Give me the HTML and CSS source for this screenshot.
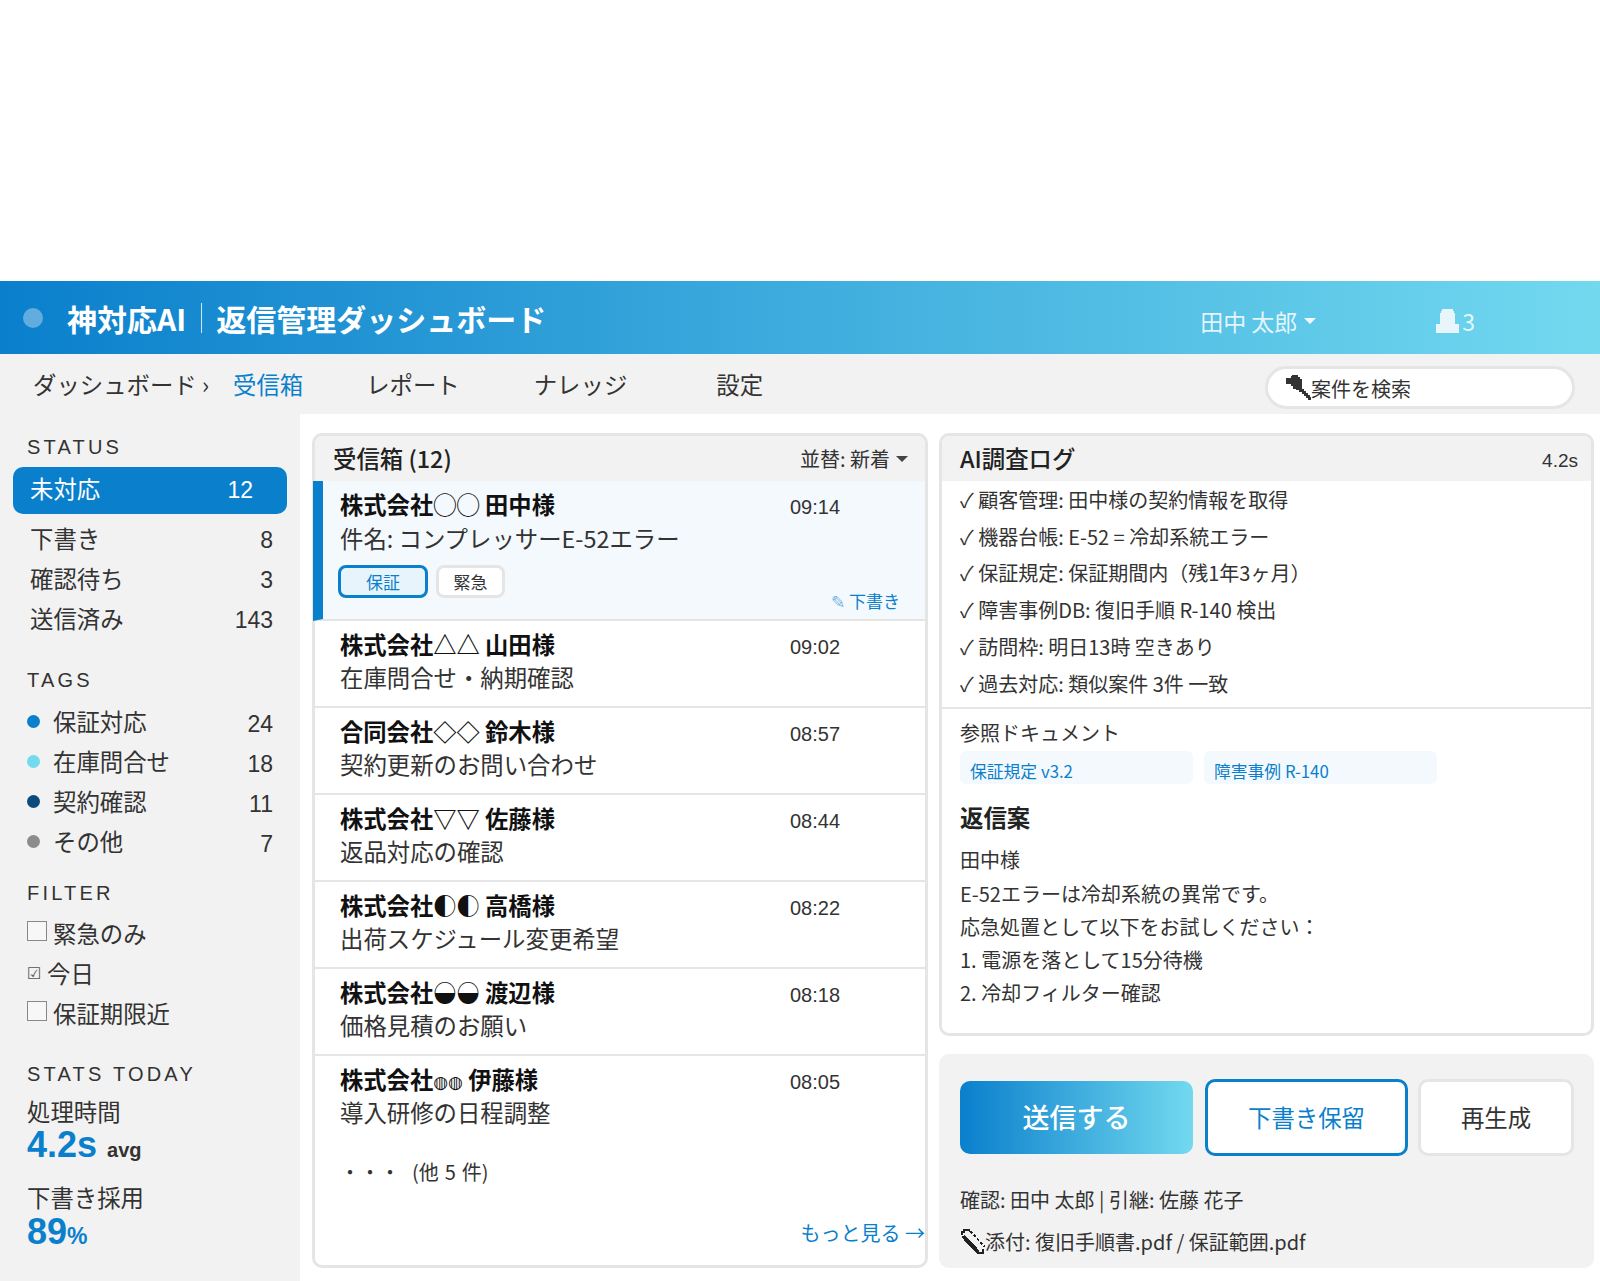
FILE: index.html
```html
<!DOCTYPE html>
<html lang="ja">
<head>
    <meta charset="UTF-8">
    <title>神対応AI | 返信管理ダッシュボード</title>
    <link rel="stylesheet" href="styles.css">
</head>
<body>
    <header class="topbar">
        <span class="logo-dot"></span>
        <span class="brand">神対応AI</span>
        <span class="brand-sep"></span>
        <span class="brand">返信管理ダッシュボード</span>
        <span class="user">田中 太郎<span class="caret caret-light"></span></span>
        <span class="bell">
            <svg width="23" height="24" viewBox="0 0 23 24" shape-rendering="crispEdges"><path d="M6 0h11v2h1v2h1v11h4v9H0v-9h4V4h1V2h1z" fill="#e8f6fc"/></svg>
            3
        </span>
    </header>

    <nav class="navbar">
        <span class="nav-crumb">ダッシュボード ›</span>
        <span class="nav-item active">受信箱</span>
        <span class="nav-item report">レポート</span>
        <span class="nav-item know">ナレッジ</span>
        <span class="nav-item conf">設定</span>
        <div class="search">
            <svg width="25" height="25" viewBox="0 0 25 25" shape-rendering="crispEdges"><path d="M6 0h6v2h2v2h2v10h2v2h2v2h2v2h2v2h1v3h-3v-2h-2v-2h-2v-2h-2v-2h-3v-2h-3v-1H7v-3H5V9H0V3h5V1h1z" fill="#333"/></svg>
            <span>案件を検索</span>
        </div>
    </nav>

    <div class="layout">
        <aside class="sidebar">
            <div class="side-head first">STATUS</div>
            <div class="status-row active"><span>未対応</span><span class="num">12</span></div>
            <div class="status-row"><span>下書き</span><span class="num">8</span></div>
            <div class="status-row"><span>確認待ち</span><span class="num">3</span></div>
            <div class="status-row"><span>送信済み</span><span class="num">143</span></div>

            <div class="side-head tags">TAGS</div>
            <div class="tag-row"><i class="dot blue"></i><span>保証対応</span><span class="num">24</span></div>
            <div class="tag-row"><i class="dot sky"></i><span>在庫問合せ</span><span class="num">18</span></div>
            <div class="tag-row"><i class="dot navy"></i><span>契約確認</span><span class="num">11</span></div>
            <div class="tag-row"><i class="dot gray"></i><span>その他</span><span class="num">7</span></div>

            <div class="side-head filter">FILTER</div>
            <div class="check-row"><i class="box"></i>緊急のみ</div>
            <div class="check-row"><span class="ballot">☑</span>今日</div>
            <div class="check-row"><i class="box"></i>保証期限近</div>

            <div class="side-head stats">STATS TODAY</div>
            <div class="stat-label">処理時間</div>
            <div class="stat-value">4.2s <small class="avg">avg</small></div>
            <div class="stat-label second">下書き採用</div>
            <div class="stat-value two">89<small class="pct">%</small></div>
        </aside>

        <section class="panel inbox">
            <div class="panel-head">
                <span class="panel-title">受信箱 (12)</span>
                <span class="sort">並替: 新着<span class="caret"></span></span>
            </div>
            <div class="mail selected">
                <div class="mail-line"><b>株式会社◯◯ 田中様</b><span class="time">09:14</span></div>
                <div class="mail-sub">件名: コンプレッサーE-52エラー</div>
                <div class="mail-tags">
                    <span class="pill pill-blue">保証</span>
                    <span class="pill pill-gray">緊急</span>
                    <span class="draft"><span class="pen">✎</span> 下書き</span>
                </div>
            </div>
            <div class="mail">
                <div class="mail-line"><b>株式会社△△ 山田様</b><span class="time">09:02</span></div>
                <div class="mail-sub">在庫問合せ・納期確認</div>
            </div>
            <div class="mail">
                <div class="mail-line"><b>合同会社◇◇ 鈴木様</b><span class="time">08:57</span></div>
                <div class="mail-sub">契約更新のお問い合わせ</div>
            </div>
            <div class="mail">
                <div class="mail-line"><b>株式会社▽▽ 佐藤様</b><span class="time">08:44</span></div>
                <div class="mail-sub">返品対応の確認</div>
            </div>
            <div class="mail">
                <div class="mail-line"><b>株式会社◐◐ 高橋様</b><span class="time">08:22</span></div>
                <div class="mail-sub">出荷スケジュール変更希望</div>
            </div>
            <div class="mail">
                <div class="mail-line"><b>株式会社◒◒ 渡辺様</b><span class="time">08:18</span></div>
                <div class="mail-sub">価格見積のお願い</div>
            </div>
            <div class="mail last">
                <div class="mail-line"><b>株式会社<span class="mark-sm">◍◍</span> 伊藤様</b><span class="time">08:05</span></div>
                <div class="mail-sub">導入研修の日程調整</div>
            </div>
            <div class="more-count">・・・<span class="more-rest">(他 5 件)</span></div>
            <div class="more-link">もっと見る →</div>
        </section>

        <div class="right">
            <section class="panel ai">
                <div class="panel-head">
                    <span class="panel-title">AI調査ログ</span>
                    <span class="elapsed">4.2s</span>
                </div>
                <ul class="log">
                    <li>✓ 顧客管理: 田中様の契約情報を取得</li>
                    <li>✓ 機器台帳: E-52 = 冷却系統エラー</li>
                    <li>✓ 保証規定: 保証期間内（残1年3ヶ月）</li>
                    <li>✓ 障害事例DB: 復旧手順 R-140 検出</li>
                    <li>✓ 訪問枠: 明日13時 空きあり</li>
                    <li>✓ 過去対応: 類似案件 3件 一致</li>
                </ul>
                <div class="refs">
                    <div class="refs-title">参照ドキュメント</div>
                    <div class="chips">
                        <span class="chip">保証規定 v3.2</span>
                        <span class="chip">障害事例 R-140</span>
                    </div>
                    <h3 class="reply-title">返信案</h3>
                    <div class="reply">
                        <p>田中様</p>
                        <p>E-52エラーは冷却系統の異常です。</p>
                        <p>応急処置として以下をお試しください：</p>
                        <p>1. 電源を落として15分待機</p>
                        <p>2. 冷却フィルター確認</p>
                    </div>
                </div>
            </section>

            <section class="actions">
                <div class="btns">
                    <button class="btn btn-send">送信する</button>
                    <button class="btn btn-hold">下書き保留</button>
                    <button class="btn btn-regen">再生成</button>
                </div>
                <div class="note">確認: 田中 太郎 | 引継: 佐藤 花子</div>
                <div class="note attach">
                    <svg width="25" height="27" viewBox="0 0 25 27" fill="none" stroke="#222" shape-rendering="crispEdges">
                        <path d="M2 7V4h2V2h6" stroke-width="2"/>
                        <path d="M3 8l15 16" stroke-width="4"/>
                        <path d="M17 25h6v-3h1" stroke-width="2"/>
                        <path d="M10 3l15 16" stroke-width="2" stroke-dasharray="3 2"/>
                    </svg>
                    添付: 復旧手順書.pdf / 保証範囲.pdf
                </div>
            </section>
        </div>
    </div>
</body>
</html>
```

FILE: styles.css
```css
* {
    box-sizing: border-box;
}
body {
    margin: 0;
    padding-top: 281px;
    background: #fff;
    color: #333;
    font-family: "Noto Sans CJK JP", "Liberation Sans", sans-serif;
    font-size: 20px;
}
.topbar {
    height: 73px;
    display: flex;
    align-items: center;
    padding-left: 23px;
    background: linear-gradient(90deg, #0a7fcc, #72d9ef);
    color: #fff;
}
.logo-dot {
    width: 20px;
    height: 20px;
    border-radius: 50%;
    background: rgba(255,255,255,0.35);
    margin-right: 24px;
}
.brand {
    font-size: 30px;
    font-weight: 700;
}
.brand-sep {
    width: 1px;
    height: 30px;
    background: rgba(255,255,255,0.8);
    margin: 0 14px 0 15px;
}
.user {
    margin-left: 654px;
    margin-top: 6px;
    font-size: 23px;
    color: rgba(255,255,255,0.85);
    display: flex;
    align-items: center;
}
.caret {
    display: inline-block;
    width: 0;
    height: 0;
    margin-left: 6px;
    border-left: 6px solid transparent;
    border-right: 6px solid transparent;
    border-top: 6px solid #444;
}
.caret-light {
    margin-left: 7px;
    border-top-color: rgba(255,255,255,0.9);
}
.bell {
    margin-left: 120px;
    margin-top: 6px;
    display: flex;
    align-items: center;
    gap: 3px;
    font-size: 23px;
    color: rgba(255,255,255,0.85);
}
.navbar {
    height: 60px;
    display: flex;
    align-items: center;
    background: #f2f2f2;
    padding-left: 33px;
    font-size: 23.4px;
}
.nav-crumb {
    width: 200px;
}
.nav-item.active {
    color: #0a7fcc;
}
.nav-item.report {
    margin-left: 63px;
}
.nav-item.know {
    margin-left: 74px;
}
.nav-item.conf {
    margin-left: 89px;
}
.search {
    margin-left: auto;
    margin-right: 25px;
    margin-top: 6px;
    width: 310px;
    height: 43px;
    border: 3px solid #e5e5e5;
    border-radius: 22px;
    background: #fff;
    display: flex;
    align-items: center;
    padding-left: 18px;
    font-size: 20px;
}
.search span {
    margin-top: 2px;
}
.layout {
    display: flex;
    height: 867px;
}
.sidebar {
    width: 300px;
    background: #f2f2f2;
    padding: 0 0 0 13px;
    font-size: 23.4px;
    flex: none;
}
.side-head {
    font-family: "Liberation Sans", sans-serif;
    font-size: 20px;
    letter-spacing: 3.2px;
    line-height: 24px;
    padding-left: 14px;
    margin-top: 28px;
    margin-bottom: 10px;
}
.side-head.first {
    margin-top: 21px;
    margin-bottom: 8px;
}
.side-head.tags {
    margin-bottom: 12px;
}
.side-head.filter {
    margin-top: 17px;
    margin-bottom: 9px;
}
.side-head.stats {
    margin-top: 28px;
    margin-bottom: 8px;
}
.status-row {
    display: flex;
    justify-content: space-between;
    align-items: center;
    height: 40px;
    padding: 0 27px 0 17px;
}
.status-row > span:first-child {
    margin-bottom: 4px;
}
.status-row.active {
    height: 47px;
    width: 274px;
    margin-bottom: 6px;
    background: #0a7fcc;
    color: #fff;
    border-radius: 10px;
    padding-right: 34px;
}
.status-row.active > span:first-child {
    margin-bottom: 6px;
}
.num {
    font-family: "Liberation Sans", sans-serif;
    font-size: 23px;
}
.tag-row {
    display: flex;
    align-items: center;
    height: 40px;
    padding: 0 27px 0 14px;
}
.tag-row > span:first-of-type {
    margin-bottom: 6px;
}
.tag-row .num {
    margin-left: auto;
}
.dot {
    width: 13px;
    height: 13px;
    border-radius: 50%;
    margin-right: 13px;
    margin-bottom: 5px;
}
.dot.blue { background: #0a7fcc; }
.dot.sky { background: #72d9ef; }
.dot.navy { background: #0b4a7d; }
.dot.gray { background: #8c8c8c; }
.check-row {
    display: flex;
    align-items: center;
    height: 40px;
    padding: 0 0 2px 14px;
}
.box {
    width: 20px;
    height: 20px;
    border: 1px solid #888;
    background: #f7f7f7;
    margin-right: 6px;
    margin-bottom: 4px;
}
.ballot {
    font-size: 16px;
    width: 20px;
    color: #555;
    font-family: "DejaVu Sans", sans-serif;
}
.stat-label {
    padding-left: 14px;
    line-height: 34px;
}
.stat-label.second {
    margin-top: 13px;
}
.stat-value {
    font-family: "Liberation Sans", sans-serif;
    font-weight: 700;
    font-size: 36px;
    line-height: 34px;
    color: #0a7fcc;
    padding-left: 14px;
}
.stat-value.two {
    margin-top: 1px;
}
.avg {
    font-size: 20px;
    color: #333;
}
.pct {
    font-size: 23px;
}
.panel {
    border: 3px solid #e5e5e5;
    border-radius: 10px;
    background: #fff;
}
.panel-head {
    height: 45px;
    background: #f2f2f2;
    border-radius: 7px 7px 0 0;
    display: flex;
    align-items: center;
    justify-content: space-between;
    padding: 0 18px 2px;
}
.panel-title {
    font-size: 23.4px;
    font-weight: 500;
    color: #222;
}
.inbox {
    position: relative;
    width: 616px;
    height: 835px;
    margin: 19px 0 0 12px;
}
.sort {
    font-size: 20px;
    display: flex;
    align-items: center;
    margin-top: 2px;
    margin-right: -1px;
}
.mail {
    height: 87px;
    padding: 2px 0 0 25px;
    border-bottom: 2px solid #e5e5e5;
}
.mail.selected {
    position: relative;
    height: 140px;
    margin-left: -2px;
    background: #f4f9fd;
    border-left: 10px solid #0a7fcc;
    padding: 2px 0 0 17px;
}
.mail.selected .mail-sub {
    margin-top: -3px;
}
.mail.last {
    border-bottom: 0;
}
.mail-line {
    display: flex;
    align-items: center;
    height: 42px;
}
.mail-line b {
    width: 450px;
    font-size: 23.3px;
    font-weight: 700;
    color: #111;
}
.mark-sm {
    font-family: "DejaVu Sans", sans-serif;
    font-size: 17px;
    vertical-align: 1px;
}
.time {
    font-family: "Liberation Sans", sans-serif;
    font-size: 20px;
    margin-top: 6px;
}
.mail-sub {
    font-size: 23.4px;
    line-height: 32px;
    margin-top: -4px;
}
.mail-tags {
    display: flex;
    gap: 8px;
    margin-top: 11px;
    margin-left: -2px;
}
.pill {
    height: 33px;
    border-radius: 8px;
    border: 3px solid #e5e5e5;
    background: #fff;
    font-size: 17px;
    display: flex;
    align-items: center;
    justify-content: center;
}
.pill-blue {
    width: 90px;
    border-color: #0a7fcc;
    background: #e8f4fc;
    color: #0a7fcc;
}
.pill-gray {
    width: 69px;
}
.draft {
    position: absolute;
    right: 25px;
    bottom: 6px;
    font-size: 17px;
    color: #0a7fcc;
}
.pen {
    color: #6fb5e2;
}
.more-count {
    font-size: 20px;
    padding: 14px 0 0 25px;
}
.more-rest {
    margin-left: 12px;
    word-spacing: 1.5px;
}
.more-link {
    position: absolute;
    right: 0;
    bottom: 18px;
    font-size: 20px;
    color: #0a7fcc;
}
.right {
    width: 655px;
    margin: 19px 0 0 11px;
}
.ai {
    height: 603px;
}
.elapsed {
    font-family: "Liberation Sans", sans-serif;
    font-size: 19px;
    margin-right: -5px;
    margin-top: 6px;
}
.log {
    list-style: none;
    margin: 0;
    padding: 1px 0 5px 18px;
    border-bottom: 2px solid #e5e5e5;
    font-size: 20px;
}
.log li {
    line-height: 36.7px;
}
.refs {
    padding: 9px 18px 0;
}
.refs-title {
    font-size: 20px;
    line-height: 30px;
}
.chips {
    display: flex;
    gap: 11px;
    margin-top: 3px;
}
.chip {
    width: 233px;
    height: 33px;
    background: #f4f9fd;
    border-radius: 6px;
    color: #0a7fcc;
    font-size: 16.8px;
    padding: 5px 0 0 10px;
    line-height: 30px;
}
.reply-title {
    margin: 16px 0 0;
    font-size: 23.4px;
    line-height: 34px;
    font-weight: 700;
    color: #222;
}
.reply {
    margin-top: 9px;
    font-size: 20px;
}
.reply p {
    margin: 0;
    line-height: 33.3px;
}
.actions {
    margin-top: 18px;
    height: 214px;
    background: #f2f2f2;
    border-radius: 10px;
    padding: 25px 20px 0 21px;
}
.btns {
    display: flex;
    gap: 10px;
    align-items: center;
    margin-bottom: 23px;
}
.btn {
    font-family: inherit;
    border-radius: 10px;
    background: #fff;
    color: #333;
    font-size: 23.4px;
    height: 77px;
    padding: 0 0 2px;
}
.btn-send {
    width: 233px;
    height: 73px;
    border: 0;
    background: linear-gradient(90deg, #0a7fcc, #72d9ef);
    color: #fff;
    font-size: 27px;
    font-weight: 500;
}
.btn-hold {
    width: 203px;
    margin-left: 2px;
    border: 3px solid #0a7fcc;
    color: #0a7fcc;
}
.btn-regen {
    width: 156px;
    border: 3px solid #e5e5e5;
}
.note {
    font-size: 20px;
    line-height: 41px;
}
.attach {
    display: flex;
    align-items: center;
    margin-top: 1px;
}
```
